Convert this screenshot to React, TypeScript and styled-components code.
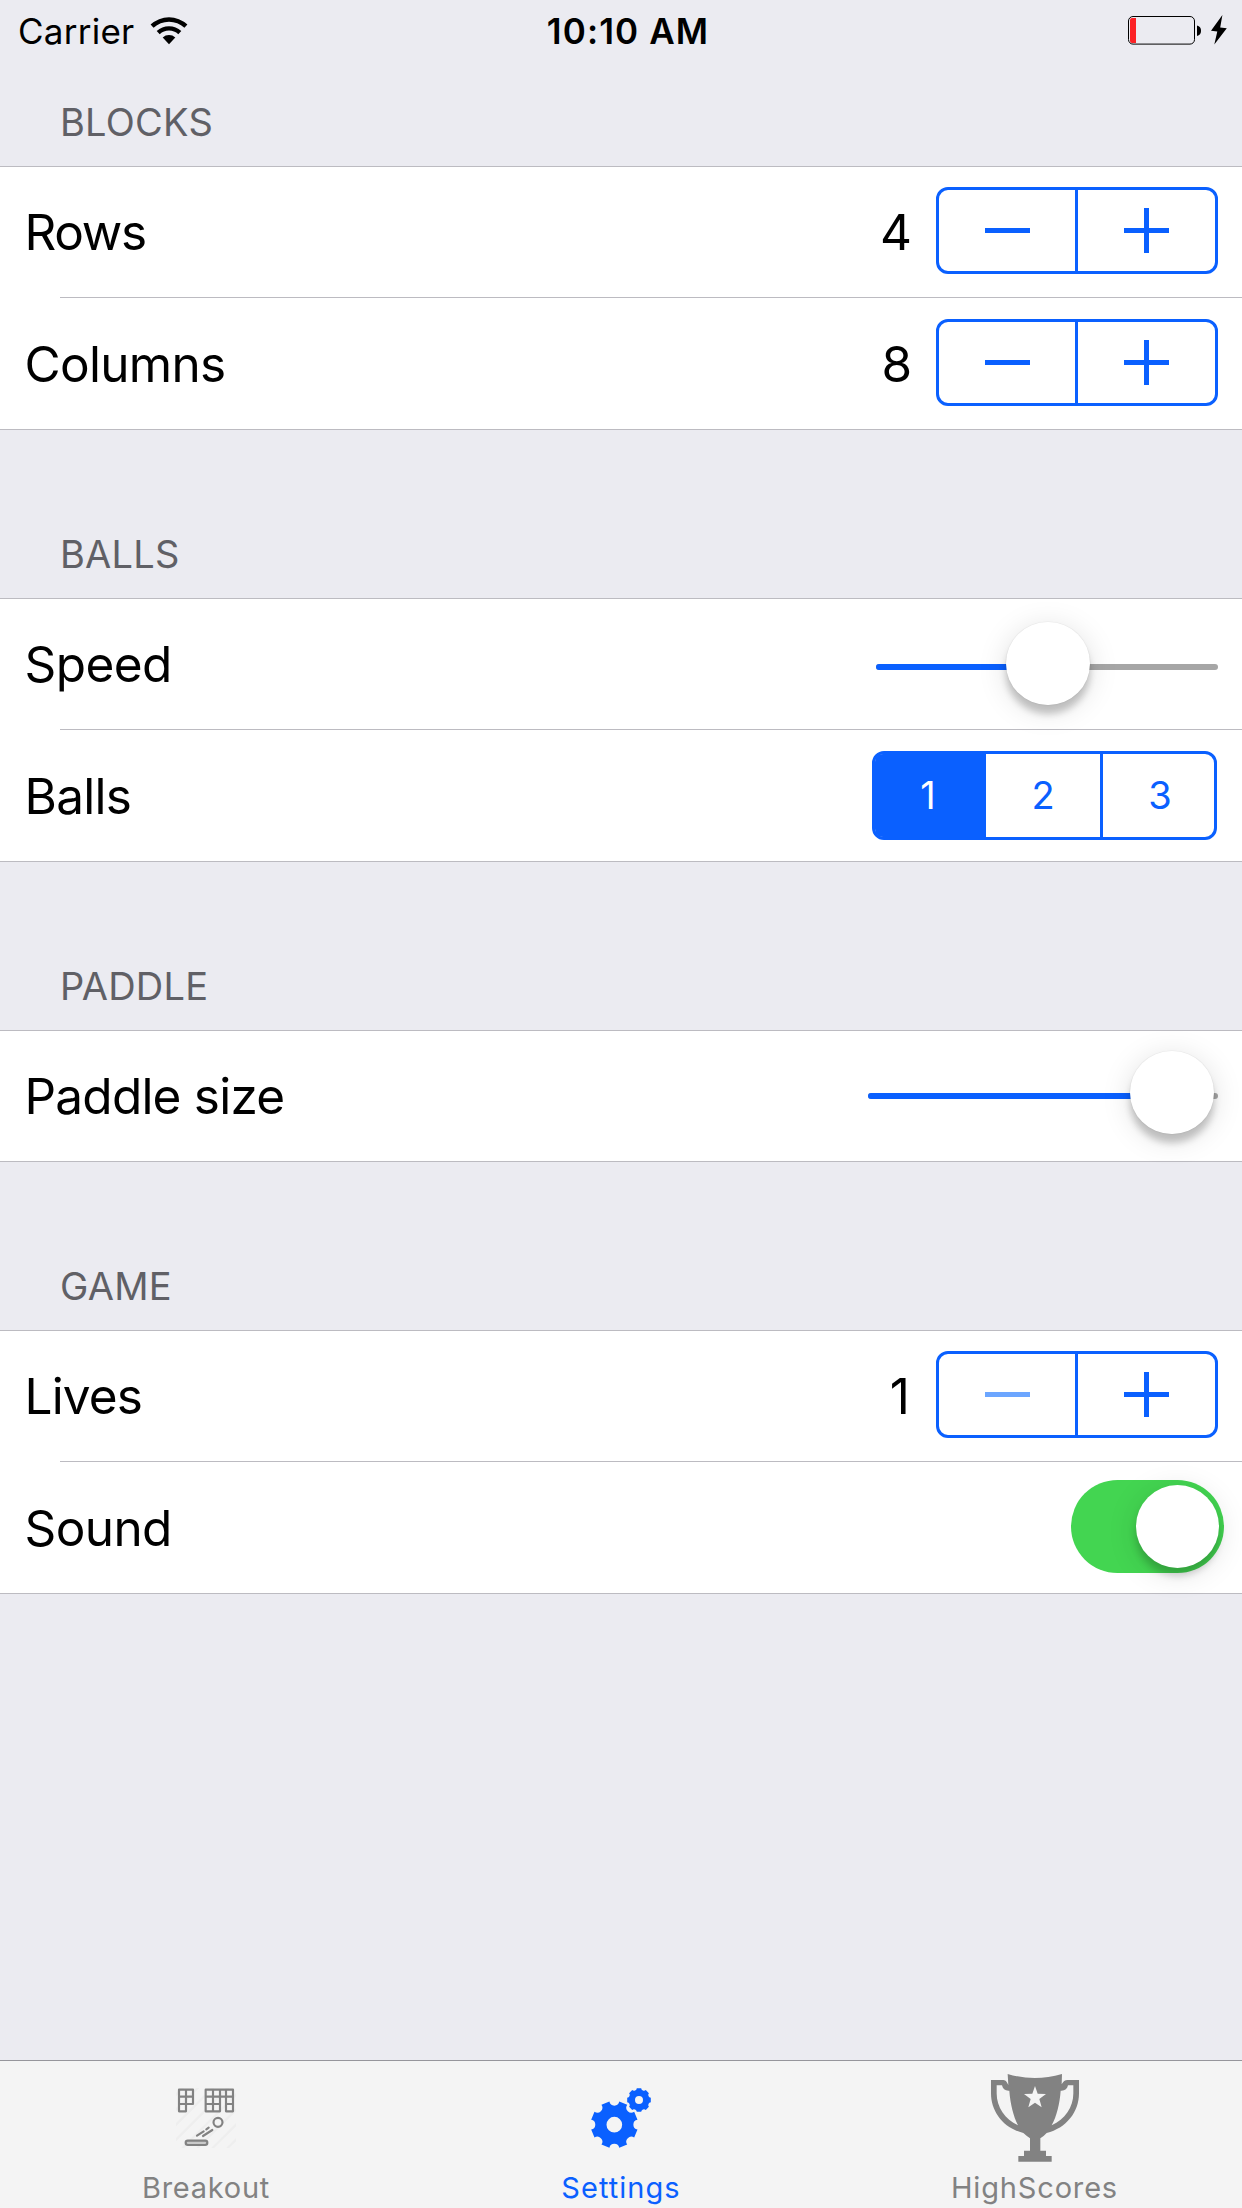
import React, { useState } from 'react';
import styled, { createGlobalStyle } from 'styled-components';

const BLUE = '#0a60ff';
const GRAY = '#828282';
const HAIRLINE = '#bcbbc1';

const GlobalStyle = createGlobalStyle`
  *, *::before, *::after { box-sizing: border-box; }
  body { margin: 0; }
  button { font: inherit; }
`;

const Screen = styled.div`
  display: flex;
  flex-direction: column;
  width: 1242px;
  height: 2208px;
  overflow: hidden;
  background: #ebebf1;
  color: #000;
  font-family: Inter, "Liberation Sans", sans-serif;
`;

/* ---------- status bar ---------- */

const StatusBar = styled.header`
  display: grid;
  grid-template-columns: 1fr auto 1fr;
  align-items: center;
  height: 60px;
  padding: 2px 4px 0 18px;
  font-size: 35px;
  line-height: 42px;
`;

const Carrier = styled.div`
  display: flex;
  align-items: center;
  gap: 16px;
  letter-spacing: 0.25px;
`;

const Clock = styled.div`
  font-weight: 600;
  letter-spacing: 1.1px;
`;

const Power = styled.div`
  display: flex;
  justify-content: flex-end;
  padding: 0 10px 2px 0;
`;

const Glyph = styled.svg`
  display: block;
  flex: none;
`;

const WifiIcon = () => (
  <Glyph width="38" height="28" viewBox="-19 -27.2 38 28">
    <path d="M-18.4 -19.7A27 27 0 0 1 18.4 -19.7L15.4 -16.5A22.6 22.6 0 0 0 -15.4 -16.5Z" />
    <path d="M-12.3 -13.2A18 18 0 0 1 12.3 -13.2L9.3 -10A13.7 13.7 0 0 0 -9.3 -10Z" />
    <path d="M-6.3 -6.8A9.3 9.3 0 0 1 6.3 -6.8L0 0Z" />
  </Glyph>
);

const BatteryIcon = () => (
  <Glyph width="100" height="32" viewBox="1128 14 100 32">
    <rect x="1128.5" y="16.5" width="66" height="27.6" rx="4.5" fill="none" stroke="#000" />
    <path d="M1132 18H1136V43H1132Q1130 43 1130 41V20Q1130 18 1132 18Z" fill="#fc2125" />
    <path d="M1197 25.6Q1201 26.4 1201 30.8Q1201 35.2 1197 36Z" />
    <path d="M1222.4 15L1211 30.8L1217.3 31.6L1214.3 44.6L1226.8 28.3L1220.2 27.6Z" />
  </Glyph>
);

/* ---------- grouped table ---------- */

const Table = styled.main`
  flex: 1;
`;

const SectionTitle = styled.h2<{ $first?: boolean }>`
  display: flex;
  align-items: flex-end;
  height: ${(p) => (p.$first ? 106 : 168)}px;
  margin: 0;
  padding: 0 60px 20px;
  color: #606066;
  font-size: 38px;
  font-weight: 400;
  line-height: 48px;
  letter-spacing: 0.25px;
`;

const Group = styled.section`
  border: solid ${HAIRLINE};
  border-width: 1px 0;
  background: #fff;
`;

const Row = styled.div`
  display: flex;
  align-items: center;
  height: 130px;
  padding: 0 24px 0 24.5px;
`;

const LastRow = styled(Row)`
  height: 131px;
`;

const Separator = styled.div`
  height: 1px;
  margin-left: 60px;
  background: ${HAIRLINE};
`;

const Label = styled.div<{ $track?: number }>`
  flex: 1;
  font-size: 49.5px;
  line-height: 60px;
  letter-spacing: ${(p) => p.$track ?? -0.7}px;
`;

const Value = styled.div<{ $narrow: boolean }>`
  margin-right: ${(p) => (p.$narrow ? 26 : 24)}px;
  font-size: 49.5px;
  line-height: 60px;
`;

/* ---------- controls ---------- */

const StepperBox = styled.div`
  display: flex;
  width: 282px;
  height: 87px;
  margin-bottom: 3px;
  border: 3px solid ${BLUE};
  border-radius: 12px;
`;

const StepButton = styled.button`
  display: flex;
  align-items: center;
  justify-content: center;
  width: 136px;
  padding: 0;
  border: 0;
  background: none;
  color: ${BLUE};

  &:disabled { color: #6ca6ff; }
  & + & { width: 140px; padding-right: 1px; border-left: 3px solid ${BLUE}; }
`;

const StepMark = ({ plus }: { plus?: boolean }) => (
  <Glyph width="45" height="45" viewBox="0 0 45 45" fill="currentColor" shapeRendering="crispEdges">
    <rect y="20" width="45" height="5" />
    {plus && <rect x="20" width="5" height="45" />}
  </Glyph>
);

const Stepper = ({ value, min, onChange }: { value: number; min: number; onChange: (v: number) => void }) => (
  <>
    <Value $narrow={value === 1}>{value}</Value>
    <StepperBox>
      <StepButton disabled={value <= min} aria-label="Decrement" onClick={() => onChange(value - 1)}>
        <StepMark />
      </StepButton>
      <StepButton aria-label="Increment" onClick={() => onChange(value + 1)}>
        <StepMark plus />
      </StepButton>
    </StepperBox>
  </>
);

const KNOB_SHADOW = '0 0 1px 0.5px rgba(0,0,0,.06), 0 9px 7px rgba(0,0,0,.2), 0 5px 30px rgba(0,0,0,.13)';

const SliderBox = styled.div<{ $width: number; $drop?: number }>`
  position: relative;
  display: flex;
  align-items: center;
  width: ${(p) => p.$width}px;
  height: 84px;
  margin-top: ${(p) => p.$drop ?? 0}px;
`;

const Track = styled.div`
  display: flex;
  width: 100%;
  height: 6px;
  overflow: hidden;
  border-radius: 3px;
  background: #a6a6a6;
`;

const Fill = styled.div`
  background: ${BLUE};
`;

const Knob = styled.div`
  position: absolute;
  top: -3.5px;
  width: 83.5px;
  height: 83.5px;
  border-radius: 50%;
  background: #fff;
  box-shadow: ${KNOB_SHADOW};
`;

const Slider = ({ width, drop, knob }: { width: number; drop?: number; knob: number }) => (
  <SliderBox $width={width} $drop={drop}>
    <Track><Fill style={{ width: knob + 42 }} /></Track>
    <Knob style={{ left: knob }} />
  </SliderBox>
);

const Segments = styled.div`
  display: flex;
  width: 345px;
  height: 89px;
  margin-right: 1px;
  border: 3px solid ${BLUE};
  border-radius: 12px;
`;

const Segment = styled.button<{ $active: boolean }>`
  flex: 1 1 0;
  padding: 0;
  border: 0;
  background: ${(p) => (p.$active ? BLUE : 'transparent')};
  color: ${(p) => (p.$active ? '#fff' : BLUE)};
  font-size: 38px;
  line-height: 83px;

  &:first-child {
    flex: 0 0 111px;
    padding-right: 5px;
    border-radius: 8px 0 0 8px;
  }
  &:nth-child(2) { flex: 0 0 114px; }
  &:last-child {
    padding-left: 3px;
    border-left: 3px solid ${BLUE};
    border-radius: 0 8px 8px 0;
  }
`;

const Switch = styled.button<{ $on: boolean }>`
  display: flex;
  align-items: center;
  justify-content: ${(p) => (p.$on ? 'flex-end' : 'flex-start')};
  width: 153px;
  height: 93px;
  margin: 0 -6px 2px 0;
  padding: 0 5px 0 5px;
  border: 0;
  border-radius: 47px;
  background: ${(p) => (p.$on ? '#43d551' : '#e5e5e5')};
`;

const SwitchKnob = styled.span`
  width: 83px;
  height: 83px;
  border-radius: 50%;
  background: #fff;
  box-shadow: 0 8px 7px rgba(0,0,0,.17), 0 5px 30px rgba(0,0,0,.13);
`;

/* ---------- tab bar ---------- */

const TabBar = styled.nav`
  display: grid;
  grid-template-columns: repeat(3, 1fr);
  height: 148px;
  border-top: 1px solid #96959b;
  background: #f4f4f4;
`;

const Tab = styled.button<{ $active?: boolean; $nudge?: number; $track: number }>`
  display: flex;
  flex-direction: column;
  align-items: center;
  padding: 0 ${(p) => p.$nudge ?? 0}px 0 0;
  border: 0;
  background: none;
  color: ${(p) => (p.$active ? BLUE : GRAY)};
  font-size: 29px;
  line-height: 26px;
  letter-spacing: ${(p) => p.$track}px;
`;

const TabIcon = styled.span`
  display: flex;
  align-items: center;
  height: 114px;
`;

const BreakoutIcon = () => (
  <Glyph width="60" height="60" viewBox="0 0 180 180" fill="none" stroke="currentColor" strokeWidth="6.5" strokeLinejoin="round" strokeLinecap="round">
    <path
      d="M-10 30L30 -10M-10 75L75 -10M-10 120L120 -10M-10 165L165 -10M20 180L190 10M65 180L190 55M110 180L190 100M155 180L190 145"
      stroke="#eeeeee" strokeWidth="7"
    />
    <path d="M9 5H51V48H30V70H9ZM30 5V48M9 26H51M9 48H30" />
    <path d="M89 5H171V70H150V26H132V70H89ZM111 5V70M132 5V26M150 5V26H171M89 26H132M89 48H132M150 48H171" />
    <circle cx="126" cy="103" r="13.5" />
    <path d="M63 143L83 130M91 124L98 119M81 144L109 126" />
    <rect x="29" y="158" width="65" height="13" rx="6.5" fill="#c9c9c9" />
  </Glyph>
);

/* Disc with round notches cut between evenly spaced teeth, and a hub hole. */
function gearPath(cx: number, cy: number, r: number, hub: number, half: number, start: number, notch: number) {
  const at = (deg: number) => {
    const a = (deg * Math.PI) / 180;
    return `${(cx + r * Math.cos(a)).toFixed(2)} ${(cy + r * Math.sin(a)).toFixed(2)}`;
  };
  let d = '';
  for (let i = 0; i < 8; i++) {
    const c = start + i * 45;
    d += `${i ? `A${notch} ${notch} 0 0 0 ` : 'M'}${at(c - half)}L${at(c + half)}`;
  }
  d += `A${notch} ${notch} 0 0 0 ${at(start - half)}Z`;
  d += `M${cx - hub} ${cy}a${hub} ${hub} 0 1 0 ${hub * 2} 0a${hub} ${hub} 0 1 0 ${-hub * 2} 0Z`;
  return d;
}

const GearsIcon = () => (
  <Glyph width="60" height="60" viewBox="0 0 180 180" fill="currentColor" fillRule="evenodd">
    <path d={gearPath(70, 110, 71, 23.5, 10.5, 22.5, 15)} />
    <path d={gearPath(144, 36, 36, 12, 10.5, 0, 8.5)} />
  </Glyph>
);

const TrophyIcon = () => (
  <Glyph width="88" height="88" viewBox="150 72 264 264" fill="currentColor" fillRule="evenodd">
    <path
      d="M200 72Q281 96 363 72L362 103C367 94 371 90 380 90H414V130C414 186 376 235 317 249Q309 258 298 265V302H315V318H332V335H232V318H249V302H267V265Q257 258 247 249C188 235 150 186 150 130V90H184C193 90 197 94 202 105Z
      M167 106V130C167 172 192 208 231 226C217 198 208 162 205 122C193 123 185 117 183 106Z
      M397 106V130C397 172 372 208 332 226C347 198 356 162 359 122C371 123 379 117 381 106Z
      M282 108L290 131L315 132L295 147L302 172L282 158L262 172L269 147L249 132L274 131Z"
    />
  </Glyph>
);

export default function App() {
  const [rows, setRows] = useState(4);
  const [columns, setColumns] = useState(8);
  const [balls, setBalls] = useState(1);
  const [lives, setLives] = useState(1);
  const [sound, setSound] = useState(true);

  return (
    <Screen>
      <GlobalStyle />
      <StatusBar>
        <Carrier>Carrier<WifiIcon /></Carrier>
        <Clock>10:10 AM</Clock>
        <Power><BatteryIcon /></Power>
      </StatusBar>

      <Table>
        <SectionTitle $first>BLOCKS</SectionTitle>
        <Group>
          <Row><Label $track={-1.3}>Rows</Label><Stepper value={rows} min={1} onChange={setRows} /></Row>
          <Separator />
          <LastRow><Label>Columns</Label><Stepper value={columns} min={1} onChange={setColumns} /></LastRow>
        </Group>

        <SectionTitle>BALLS</SectionTitle>
        <Group>
          <Row><Label $track={-0.55}>Speed</Label><Slider width={342} drop={6} knob={130} /></Row>
          <Separator />
          <LastRow>
            <Label>Balls</Label>
            <Segments>
              {[1, 2, 3].map((n) => (
                <Segment key={n} $active={n === balls} onClick={() => setBalls(n)}>{n}</Segment>
              ))}
            </Segments>
          </LastRow>
        </Group>

        <SectionTitle>PADDLE</SectionTitle>
        <Group>
          <Row><Label $track={-0.78}>Paddle size</Label><Slider width={350} knob={262} /></Row>
        </Group>

        <SectionTitle>GAME</SectionTitle>
        <Group>
          <Row><Label $track={-0.85}>Lives</Label><Stepper value={lives} min={1} onChange={setLives} /></Row>
          <Separator />
          <LastRow>
            <Label $track={-0.6}>Sound</Label>
            <Switch $on={sound} aria-label="Sound" onClick={() => setSound(!sound)}><SwitchKnob /></Switch>
          </LastRow>
        </Group>
      </Table>

      <TabBar>
        <Tab $nudge={2} $track={0.75}><TabIcon><BreakoutIcon /></TabIcon>Breakout</Tab>
        <Tab $active $track={1.05}><TabIcon><GearsIcon /></TabIcon>Settings</Tab>
        <Tab $nudge={1} $track={0.83}><TabIcon><TrophyIcon /></TabIcon>HighScores</Tab>
      </TabBar>
    </Screen>
  );
}
